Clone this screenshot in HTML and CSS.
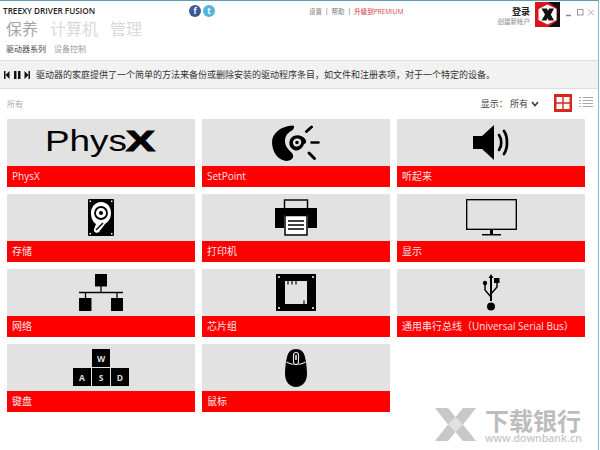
FILE: index.html
```html
<!DOCTYPE html>
<html lang="zh">
<head>
<meta charset="utf-8">
<title>Treexy Driver Fusion</title>
<link rel="stylesheet" href="styles.css">
</head>
<body>
<div class="window">
  <header class="header">
    <div class="brand-col">
      <div class="title-row">
        <div class="title">TREEXY DRIVER FUSION</div>
        <div class="socials">
          <span class="social fb">f</span>
          <span class="social tw">t</span>
        </div>
        <div class="links"><span>设置</span><i>|</i><span>帮助</span><i>|</i><b>升级到PREMIUM</b></div>
      </div>
      <nav class="nav"><span class="on">保养</span><span>计算机</span><span>管理</span></nav>
      <div class="tabs"><span class="on">驱动器系列</span><span>设备控制</span></div>
    </div>
    <div class="account">
      <div class="login"><strong>登录</strong><small>创建新帐户</small></div>
      <svg class="logo" viewBox="0 0 25 25" width="25" height="25">
        <rect width="25" height="25" fill="#d8141c"/>
        <path d="M13 0H25V25H13L22 19V6Z" fill="#111"/>
        <path d="M12.5 2.5L21.5 7V18L12.5 22.5L3.5 18V7Z" fill="#fff"/>
        <path d="M6.5 6.5H12L13 9L14 6.5H19L15.8 12.5L19 18.5H13.6L12.6 16L11.5 18.5H6.5L10 12.5Z" fill="#111"/>
      </svg>
      <div class="controls">
        <svg viewBox="0 0 28 10" width="28" height="10"><path d="M0 8.500H5" stroke="#888" stroke-width="1.500"/><rect x="11.500" y="2.500" width="5.500" height="5.500" fill="none" stroke="#999"/><path d="M22 2.500L28 8.500M28 2.500L22 8.500" stroke="#aaa"/></svg>
      </div>
    </div>
  </header>

  <div class="toolbar">
    <div class="transport">
      <svg viewBox="0 0 26 8" width="26" height="8"><path d="M0 0H1.500V8H0ZM1.500 4L5.500 0V8ZM10 0H12.500V8H10ZM14 0H16.500V8H14ZM20.500 0L24.500 4L20.500 8ZM24.500 0H26V8H24.500Z" fill="#111"/></svg>
    </div>
    <p>驱动器的家庭提供了一个简单的方法来备份或删除安装的驱动程序条目，如文件和注册表项，对于一个特定的设备。</p>
  </div>

  <div class="filters">
    <span class="all">所有</span>
    <div class="view">
      <span class="show">显示： 所有</span>
      <svg class="chev" viewBox="0 0 8 6" width="8" height="6"><path d="M1 1L4 4.500L7 1" fill="none" stroke="#333" stroke-width="1.500"/></svg>
      <svg class="grid-btn" viewBox="0 0 18 18" width="18" height="18"><rect width="18" height="18" fill="#d8251d"/><path d="M2.500 3H8.300V8.300H2.500ZM9.700 3H15.500V8.300H9.700ZM2.500 9.700H8.300V15H2.500ZM9.700 9.700H15.500V15H9.700Z" fill="#fff"/></svg>
      <svg class="list-btn" viewBox="0 0 14 12" width="14" height="12"><path d="M0 .5H2M3.500 .5H14M0 3.500H2M3.500 3.500H14M0 6.500H2M3.500 6.500H14M0 9.500H2M3.500 9.500H14" stroke="#aaa" fill="none"/></svg>
    </div>
  </div>

  <main class="cards">
    <article class="card">
      <div class="art">
        <svg class="physx" viewBox="0 0 110 36" width="110" height="36"><text class="physx-a" x="-1" y="25.500" textLength="82" lengthAdjust="spacingAndGlyphs">Phys</text><text class="physx-b" x="80" y="25.500" textLength="29" lengthAdjust="spacingAndGlyphs">X</text></svg>
      </div>
      <div class="label">PhysX</div>
    </article>

    <article class="card">
      <div class="art">
        <svg viewBox="0 0 48 36" width="48" height="36"><path d="M21 .5C23 1 22 4 20 5.500C15 8 13 12 13 16C13 21 16 24 20 28C23 32 20 36 14 36C6 35 0 27 0 17C0 9 8 1 21 .5Z"/><path fill-rule="evenodd" d="M19 13C21 10 27 9 31 12C35 14 35 19 32 19C31 23 26 27 22 25C17 23 16 17 19 13ZM22 15C20 17 21 21 24 21.500C27 22 30 19 29 16C28 13 24 13 22 15Z"/><circle cx="25" cy="17.500" r="1.800"/><path d="M34.500 6.500L39.500 2" stroke="#000" stroke-width="3" stroke-linecap="round"/><path d="M39.500 17.500H46.500" stroke="#000" stroke-width="2.600" stroke-linecap="round"/><path d="M37 28L42.500 33.500" stroke="#000" stroke-width="3" stroke-linecap="round"/></svg>
      </div>
      <div class="label">SetPoint</div>
    </article>

    <article class="card">
      <div class="art">
        <svg viewBox="0 0 37 35" width="37" height="35"><path d="M0 11H9L21 0V35L9 24H0Z"/><path d="M26 10C29 14 29 21 26 25M31 6C35 12 35 23 31 29" fill="none" stroke="#000" stroke-width="2.800" stroke-linecap="round"/></svg>
      </div>
      <div class="label">听起来</div>
    </article>

    <article class="card">
      <div class="art">
        <svg viewBox="0 0 26 37" width="26" height="37"><rect width="26" height="37" rx="1"/><path d="M13 3C19.500 3 23 8 23 14C23 20 20 23 17 25L11 33C9 35 5 33 6 30L8 25C5 23 3 19 3 14C3 8 7 3 13 3Z" fill="#fff"/><circle cx="13" cy="14" r="6" fill="none" stroke="#000" stroke-width="1.800"/><circle cx="13" cy="14" r="2" fill="#000"/><path d="M8 31L15 24" stroke="#000" stroke-width="1.500"/><g fill="#fff"><rect x="1.500" y="1.500" width="1.500" height="1.500"/><rect x="23" y="1.500" width="1.500" height="1.500"/><rect x="1.500" y="34" width="1.500" height="1.500"/><rect x="23" y="34" width="1.500" height="1.500"/></g></svg>
      </div>
      <div class="label">存储</div>
    </article>

    <article class="card">
      <div class="art">
        <svg viewBox="0 0 42 37" width="42" height="37"><path d="M0 9H42V29H33V16H9V29H0Z"/><rect x="9.500" y="1" width="23" height="9" fill="none" stroke="#000" stroke-width="1.500"/><rect x="10" y="16.500" width="22" height="19.500" fill="#fff" stroke="#000" stroke-width="1.500"/><path d="M13 22H29M13 26H29M13 30H29" stroke="#000" stroke-width="1.500"/></svg>
      </div>
      <div class="label">打印机</div>
    </article>

    <article class="card">
      <div class="art">
        <svg viewBox="0 0 51 37" width="51" height="37"><rect x=".7" y=".7" width="49.600" height="29.600" fill="none" stroke="#000" stroke-width="1.400"/><path d="M24 31H27V35H24ZM16 35H35V36.500H16Z"/></svg>
      </div>
      <div class="label">显示</div>
    </article>

    <article class="card">
      <div class="art">
        <svg viewBox="0 0 44 37" width="44" height="37"><rect x="16" y="0" width="12" height="12.500"/><rect x="0" y="24" width="12.500" height="13"/><rect x="32" y="24" width="12.500" height="13"/><path d="M22 12V18M0 18.500H44M6.500 18.500V24M38 18.500V24" stroke="#000" stroke-width="1.300" fill="none"/></svg>
      </div>
      <div class="label">网络</div>
    </article>

    <article class="card">
      <div class="art">
        <svg viewBox="0 0 40 37" width="40" height="37"><path fill-rule="evenodd" d="M0 0H40V37H0ZM9 7V30H31V7Z"/><g fill="#fff"><circle cx="3" cy="3" r="1"/><circle cx="37" cy="3" r="1"/><circle cx="3" cy="34" r="1"/><circle cx="37" cy="34" r="1"/></g><path d="M12 7V10.500M16 7V10.500M20 7V10.500M28 30V26.500" stroke="#000" stroke-width="1.200"/></svg>
      </div>
      <div class="label">芯片组</div>
    </article>

    <article class="card">
      <div class="art">
        <svg viewBox="0 0 18 37" width="18" height="37"><path d="M9 0L11.500 4H10V27H8V4H6.500Z"/><path d="M9 23L3 16V10M9 20L15 13V8" fill="none" stroke="#000" stroke-width="1.500"/><circle cx="3" cy="9" r="2.200"/><rect x="12" y="4" width="5.500" height="5"/><circle cx="9" cy="32.500" r="4"/></svg>
      </div>
      <div class="label">通用串行总线（Universal Serial Bus）</div>
    </article>

    <article class="card">
      <div class="art">
        <div class="keys">
          <span class="key key-w">W</span>
          <span class="key key-a">A</span>
          <span class="key key-s">S</span>
          <span class="key key-d">D</span>
        </div>
      </div>
      <div class="label">键盘</div>
    </article>

    <article class="card">
      <div class="art">
        <svg viewBox="0 0 22 38" width="22" height="38"><path d="M11 0C16 0 19 3 20 8C21 12 22 19 22 25C22 33 17 38 11 38C5 38 0 33 0 25C0 19 1 12 2 8C3 3 6 0 11 0Z"/><path d="M1.500 13C4 14.500 6 15 8.500 15.500M20.500 13C18 14.500 16 15 13.500 15.500" fill="none" stroke="#e2e2e2" stroke-width="1.200"/><rect x="8.500" y="3.500" width="5" height="12" rx="2.500" fill="#000" stroke="#e2e2e2" stroke-width="1.200"/><rect x="10.200" y="6" width="1.600" height="5" fill="#e2e2e2"/></svg>
      </div>
      <div class="label">鼠标</div>
    </article>
  </main>

  <div class="watermark">
    <svg viewBox="0 0 41 33" width="41" height="33"><path d="M0 0H13L20.500 9L28 0H41L28 16.500L41 33H28L20.500 24L13 33H0L13 16.500Z" fill="#c8c8c8"/><path d="M20.500 9L28 16.500L20.500 24L13 16.500Z" fill="#e2e2e2"/></svg>
    <div class="wm-text"><strong>下载银行</strong><small>www.downbank.cn</small></div>
  </div>
</div>
</body>
</html>
```
FILE: styles.css
```css
* { box-sizing: border-box; }
html, body { margin: 0; padding: 0; }
body {
  width: 600px;
  height: 450px;
  overflow: hidden;
  background: #fff;
  font-family: "Open Sans", "Noto Sans CJK SC", sans-serif;
  color: #222;
}
.window {
  position: relative;
  width: 599px;
  height: 450px;
  border-top: 1px solid #5a9fb5;
  border-right: 1px solid #8fb8c6;
}
.header {
  display: flex;
  justify-content: space-between;
  height: 59px;
}
.brand-col { width: 490px; padding-left: 3px; }
.title-row { display: flex; align-items: center; height: 19px; }
.title { width: 186px; font-size: 8.200px; font-weight: 600; color: #222; white-space: nowrap; }
.socials { display: flex; gap: 2px; width: 120px; }
.social {
  display: flex;
  align-items: center;
  justify-content: center;
  width: 12px;
  height: 12px;
  border-radius: 50%;
  color: #fff;
  font-size: 8px;
  font-weight: 700;
  line-height: 1;
}
.fb { background: #3b5998; }
.tw { background: #55b4dc; }
.links { display: flex; align-items: center; font-size: 6.500px; color: #777; white-space: nowrap; }
.links i { font-style: normal; margin: 0 3px; color: #555; }
.links b { font-weight: 500; color: #d8474a; }
.nav { display: flex; gap: 12px; height: 19px; align-items: center; padding-left: 3px; font-size: 16px; line-height: 19px; color: #d9d9d9; }
.nav .on { color: #a6a6a6; }
.tabs { display: flex; gap: 8px; padding-left: 3px; margin-top: 4px; font-size: 8px; line-height: 12px; color: #9a9a9a; }
.tabs .on { color: #444; }
.account { display: flex; align-items: flex-start; padding-top: 1px; }
.login { display: flex; flex-direction: column; align-items: flex-end; margin-right: 5px; padding-top: 4px; }
.login strong { font-size: 9px; line-height: 11px; font-weight: 700; color: #222; }
.login small { font-size: 6.500px; line-height: 10px; color: #888; }
.logo { display: block; }
.controls { width: 38px; padding: 5px 0 0 6px; line-height: 0; }
.toolbar {
  display: flex;
  align-items: center;
  height: 29px;
  background: #f2f2f2;
  border-top: 1px solid #dedede;
  border-bottom: 1px solid #dedede;
}
.transport { width: 36px; padding-left: 4px; line-height: 0; }
.toolbar p { margin: 0; font-size: 9px; color: #333; white-space: nowrap; }
.filters {
  display: flex;
  align-items: center;
  justify-content: space-between;
  height: 30px;
  padding: 0 5px 2px 7px;
}
.all { font-size: 8px; color: #aaa; }
.view { display: flex; align-items: center; }
.show { font-size: 9px; color: #444; white-space: pre; }
.chev { margin: 1px 0 0 3px; }
.grid-btn { margin-left: 15px; }
.list-btn { margin-left: 7px; }
.cards {
  display: grid;
  grid-template-columns: repeat(3, 188px);
  grid-auto-rows: 68px;
  gap: 7px;
  padding-left: 7px;
}
.card { display: flex; flex-direction: column; background: #e2e2e2; }
.art { display: flex; align-items: center; justify-content: center; height: 47px; }
.art svg { display: block; filter: drop-shadow(0 0 .5px #fff); }
.art .physx { filter: none; overflow: visible; }
.label {
  height: 21px;
  padding-left: 5px;
  background: #ff0000;
  color: #fde4e4;
  font-size: 10px;
  line-height: 20px;
  white-space: nowrap;
}
.physx-a { font-family: "Liberation Sans", sans-serif; font-size: 29px; font-weight: 400; }
.physx-b { font-family: "Liberation Sans", sans-serif; font-size: 29px; font-weight: 700; stroke: #000; stroke-width: 1px; }
.keys {
  display: grid;
  grid-template-columns: repeat(3, 18px);
  grid-auto-rows: 18px;
  gap: 1px;
}
.key {
  display: flex;
  align-items: center;
  justify-content: center;
  background: #000;
  color: #ddd;
  font-family: "Open Sans", sans-serif;
  font-size: 8.500px;
  font-weight: 700;
}
.key-w { grid-column: 2; grid-row: 1; }
.key-a { grid-column: 1; grid-row: 2; }
.key-s { grid-column: 2; grid-row: 2; }
.key-d { grid-column: 3; grid-row: 2; }
.watermark {
  position: absolute;
  left: 435px;
  top: 407px;
  display: flex;
  gap: 9px;
}
.wm-text { display: flex; flex-direction: column; }
.wm-text strong { font-family: "Noto Sans CJK SC", sans-serif; font-size: 24px; line-height: 24px; font-weight: 700; color: #bcbcbc; white-space: nowrap; }
.wm-text small { margin-top: 1px; font-family: "Open Sans", sans-serif; font-size: 10.500px; line-height: 10px; font-weight: 600; color: #c8c8c8; white-space: nowrap; }
```
